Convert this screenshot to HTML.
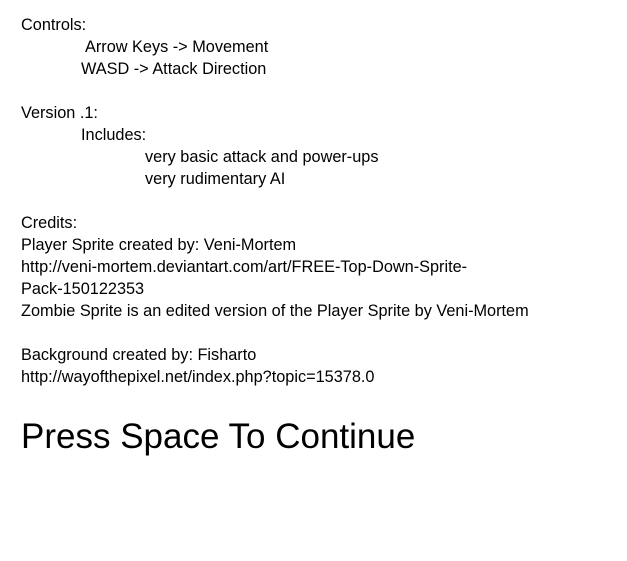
<!DOCTYPE html>
<html><head><meta charset="utf-8"><style>
html,body{margin:0;padding:0;background:#fff;width:627px;height:561px;overflow:hidden;}
div{position:absolute;font-family:"Liberation Sans",Arial,sans-serif;font-size:16.3px;color:#000;white-space:nowrap;line-height:22px;}
.big{font-size:35px;line-height:40px;}
</style></head><body>
<div style="left:21px;top:14px">Controls:</div>
<div style="left:85px;top:36px">Arrow Keys -&gt; Movement</div>
<div style="left:81px;top:58px">WASD -&gt; Attack Direction</div>
<div style="left:21px;top:102px">Version .1:</div>
<div style="left:81px;top:124px">Includes:</div>
<div style="left:145px;top:146px">very basic attack and power-ups</div>
<div style="left:145px;top:168px">very rudimentary AI</div>
<div style="left:21px;top:212px">Credits:</div>
<div style="left:21px;top:234px">Player Sprite created by: Veni-Mortem</div>
<div style="left:21px;top:256px">http://veni-mortem.deviantart.com/art/FREE-Top-Down-Sprite-</div>
<div style="left:21px;top:278px">Pack-150122353</div>
<div style="left:21px;top:300px">Zombie Sprite is an edited version of the Player Sprite by Veni-Mortem</div>
<div style="left:21px;top:344px">Background created by: Fisharto</div>
<div style="left:21px;top:366px">http://wayofthepixel.net/index.php?topic=15378.0</div>
<div class="big" style="left:21px;top:417px">Press Space To Continue</div>
</body></html>
